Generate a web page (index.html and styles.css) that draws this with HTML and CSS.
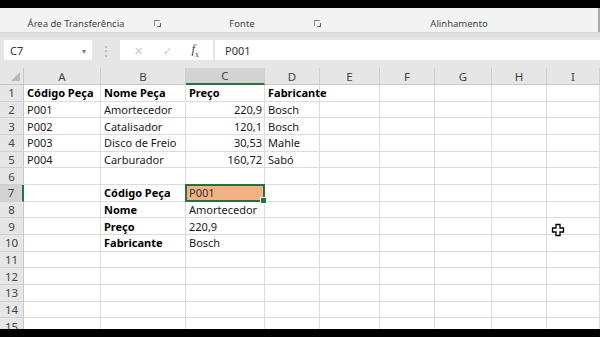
FILE: index.html
```html
<!DOCTYPE html>
<html>
<head>
  <meta charset="UTF-8">
  <title>Planilha de Peças</title>
  <link rel="stylesheet" href="styles.css">
</head>
<body>
<div class="frame">
  <div class="ribbon">
    <div class="group group-clip">
      <span class="group-label">Área de Transferência</span>
      <span class="launcher"></span>
    </div>
    <div class="group group-font">
      <span class="group-label">Fonte</span>
      <span class="launcher"></span>
    </div>
    <div class="group group-align">
      <span class="group-label">Alinhamento</span>
    </div>
  </div>

  <div class="formula-bar">
    <div class="name-box">
      <span>C7</span>
      <span class="drop">&#9662;</span>
    </div>
    <div class="grip">&#8942;</div>
    <div class="fx-buttons">
      <span class="btn-cancel">&#10005;</span>
      <span class="btn-ok">&#10003;</span>
      <span class="btn-fx"><i>f</i><sub>x</sub></span>
    </div>
    <div class="formula-input">P001</div>
  </div>

  <div class="sheet">
    <div class="grid">
      <div class="corner"></div>
      <div class="col-head">A</div>
      <div class="col-head">B</div>
      <div class="col-head active">C</div>
      <div class="col-head">D</div>
      <div class="col-head">E</div>
      <div class="col-head">F</div>
      <div class="col-head">G</div>
      <div class="col-head">H</div>
      <div class="col-head">I</div>

      <div class="row-head">1</div>
      <div class="cell bold">Código Peça</div>
      <div class="cell bold">Nome Peça</div>
      <div class="cell bold">Preço</div>
      <div class="cell bold">Fabricante</div>
      <div class="cell"></div><div class="cell"></div><div class="cell"></div><div class="cell"></div><div class="cell"></div>

      <div class="row-head">2</div>
      <div class="cell">P001</div>
      <div class="cell">Amortecedor</div>
      <div class="cell num">220,9</div>
      <div class="cell">Bosch</div>
      <div class="cell"></div><div class="cell"></div><div class="cell"></div><div class="cell"></div><div class="cell"></div>

      <div class="row-head">3</div>
      <div class="cell">P002</div>
      <div class="cell">Catalisador</div>
      <div class="cell num">120,1</div>
      <div class="cell">Bosch</div>
      <div class="cell"></div><div class="cell"></div><div class="cell"></div><div class="cell"></div><div class="cell"></div>

      <div class="row-head">4</div>
      <div class="cell">P003</div>
      <div class="cell">Disco de Freio</div>
      <div class="cell num">30,53</div>
      <div class="cell">Mahle</div>
      <div class="cell"></div><div class="cell"></div><div class="cell"></div><div class="cell"></div><div class="cell"></div>

      <div class="row-head">5</div>
      <div class="cell">P004</div>
      <div class="cell">Carburador</div>
      <div class="cell num">160,72</div>
      <div class="cell">Sabó</div>
      <div class="cell"></div><div class="cell"></div><div class="cell"></div><div class="cell"></div><div class="cell"></div>

      <div class="row-head">6</div>
      <div class="cell"></div><div class="cell"></div><div class="cell"></div><div class="cell"></div>
      <div class="cell"></div><div class="cell"></div><div class="cell"></div><div class="cell"></div><div class="cell"></div>

      <div class="row-head active">7</div>
      <div class="cell"></div>
      <div class="cell bold">Código Peça</div>
      <div class="cell selected">P001<span class="handle"></span></div>
      <div class="cell"></div>
      <div class="cell"></div><div class="cell"></div><div class="cell"></div><div class="cell"></div><div class="cell"></div>

      <div class="row-head">8</div>
      <div class="cell"></div>
      <div class="cell bold">Nome</div>
      <div class="cell">Amortecedor</div>
      <div class="cell"></div>
      <div class="cell"></div><div class="cell"></div><div class="cell"></div><div class="cell"></div><div class="cell"></div>

      <div class="row-head">9</div>
      <div class="cell"></div>
      <div class="cell bold">Preço</div>
      <div class="cell">220,9</div>
      <div class="cell"></div>
      <div class="cell"></div><div class="cell"></div><div class="cell"></div><div class="cell"></div><div class="cell"></div>

      <div class="row-head">10</div>
      <div class="cell"></div>
      <div class="cell bold">Fabricante</div>
      <div class="cell">Bosch</div>
      <div class="cell"></div>
      <div class="cell"></div><div class="cell"></div><div class="cell"></div><div class="cell"></div><div class="cell"></div>

      <div class="row-head">11</div>
      <div class="cell"></div><div class="cell"></div><div class="cell"></div><div class="cell"></div>
      <div class="cell"></div><div class="cell"></div><div class="cell"></div><div class="cell"></div><div class="cell"></div>

      <div class="row-head">12</div>
      <div class="cell"></div><div class="cell"></div><div class="cell"></div><div class="cell"></div>
      <div class="cell"></div><div class="cell"></div><div class="cell"></div><div class="cell"></div><div class="cell"></div>

      <div class="row-head">13</div>
      <div class="cell"></div><div class="cell"></div><div class="cell"></div><div class="cell"></div>
      <div class="cell"></div><div class="cell"></div><div class="cell"></div><div class="cell"></div><div class="cell"></div>

      <div class="row-head">14</div>
      <div class="cell"></div><div class="cell"></div><div class="cell"></div><div class="cell"></div>
      <div class="cell"></div><div class="cell"></div><div class="cell"></div><div class="cell"></div><div class="cell"></div>

      <div class="row-head">15</div>
      <div class="cell"></div><div class="cell"></div><div class="cell"></div><div class="cell"></div>
      <div class="cell"></div><div class="cell"></div><div class="cell"></div><div class="cell"></div><div class="cell"></div>
    </div>

    <svg class="cursor" width="14" height="14" viewBox="0 0 14 14">
      <path d="M5 1.5h4v3.5h3.5v4H9v3.5H5V9H1.5V5H5z" fill="#fff" stroke="#000" stroke-width="1.3"/>
    </svg>
  </div>
</div>
</body>
</html>
```

FILE: styles.css
```css
html, body {
  margin: 0;
  padding: 0;
  background: #000;
}

.frame {
  width: 600px;
  height: 337px;
  padding-top: 8px;
  box-sizing: border-box;
  display: flex;
  flex-direction: column;
  font-family: "Noto Sans", "Open Sans", sans-serif;
  color: #222;
  overflow: hidden;
}

/* ribbon group labels */
.ribbon {
  height: 24px;
  background: #f3f3f3;
  border-bottom: 1px solid #d6d6d6;
  display: flex;
  flex-shrink: 0;
}

.group {
  position: relative;
  display: flex;
  align-items: center;
  justify-content: center;
  font-size: 9.5px;
  color: #444;
  padding-top: 6px;
  box-sizing: border-box;
}

.group-clip {
  width: 162px;
}

.group-font {
  width: 160px;
}

.group-align {
  flex: 1;
  border-right: 2px solid #aaa;
  padding-right: 2px;
}

.group-clip .group-label {
  margin-right: 10px;
}

.launcher {
  position: absolute;
  right: 2px;
  top: 12px;
  width: 5px;
  height: 5px;
  border-left: 1px solid #888;
  border-top: 1px solid #888;
}

.launcher::after {
  content: "";
  position: absolute;
  right: -1px;
  bottom: -1px;
  width: 3px;
  height: 3px;
  border-right: 1px solid #666;
  border-bottom: 1px solid #666;
}

/* formula bar */
.formula-bar {
  height: 35px;
  background: #e6e6e6;
  border-top: 5px solid #e0e0e0;
  box-sizing: border-box;
  padding: 2px 0 8px 4px;
  display: flex;
  align-items: stretch;
  flex-shrink: 0;
}

.name-box {
  width: 88px;
  background: #fff;
  display: flex;
  align-items: center;
  justify-content: space-between;
  padding: 0 6px 0 6px;
  box-sizing: border-box;
  font-size: 11px;
  color: #333;
}

.drop {
  font-size: 8px;
  color: #777;
}

.grip {
  width: 28px;
  display: flex;
  align-items: center;
  justify-content: center;
  color: #aaa;
  font-size: 12px;
}

.fx-buttons {
  width: 93px;
  background: #fff;
  display: flex;
  align-items: center;
  justify-content: space-around;
  padding: 0 4px;
  box-sizing: border-box;
  color: #c8c8c8;
  font-size: 11px;
}

.btn-fx {
  color: #444;
  font-family: "Liberation Serif", serif;
  font-size: 13px;
}

.btn-fx sub {
  font-size: 8px;
}

.formula-input {
  flex: 1;
  margin-left: 2px;
  background: #fff;
  display: flex;
  align-items: center;
  padding-left: 10px;
  font-size: 11px;
  color: #333;
}

/* sheet */
.sheet {
  position: relative;
  height: 261px;
  background: #fff;
  overflow: hidden;
  flex-shrink: 0;
}

.grid {
  display: grid;
  grid-template-columns: 24px 77px 85px 79px 55px 60px 55px 57px 55px 53px;
  grid-template-rows: 17px repeat(15, 16.66px);
}

.corner,
.col-head,
.row-head {
  background: #e6e6e6;
  color: #444;
  font-size: 11.5px;
  display: flex;
  align-items: center;
  justify-content: center;
  box-sizing: border-box;
}

.corner {
  position: relative;
  border-right: 1px solid #c8c8c8;
  border-bottom: 1px solid #c8c8c8;
}

.corner::after {
  content: "";
  position: absolute;
  right: 3px;
  bottom: 3px;
  border-left: 9px solid transparent;
  border-bottom: 9px solid #b8b8b8;
}

.col-head {
  border-right: 1px solid #cfcfcf;
  border-bottom: 1px solid #c8c8c8;
}

.row-head {
  border-right: 1px solid #c8c8c8;
  border-bottom: 1px solid #d0d0d0;
}

.col-head.active {
  background: #d3d3d3;
  border-bottom: 2px solid #217346;
}

.row-head.active {
  background: #d3d3d3;
  border-right: 2px solid #217346;
}

.cell {
  border-right: 1px solid #dcdcdc;
  border-bottom: 1px solid #dcdcdc;
  font-size: 11px;
  color: #1a1a1a;
  padding: 0 3px;
  display: flex;
  align-items: center;
  white-space: nowrap;
  box-sizing: border-box;
  overflow: visible;
}

.bold {
  font-weight: bold;
  color: #000;
}

.num {
  justify-content: flex-end;
  padding-right: 2px;
}

.selected {
  position: relative;
  background: #f4b183;
  border: 2px solid #217346;
  margin: -1px 0 0 -1px;
  padding-left: 2px;
  color: #333;
}

.handle {
  position: absolute;
  right: -4px;
  bottom: -4px;
  width: 5px;
  height: 5px;
  background: #217346;
  border: 1px solid #fff;
}

.cursor {
  position: absolute;
  left: 551px;
  top: 155px;
}
```
